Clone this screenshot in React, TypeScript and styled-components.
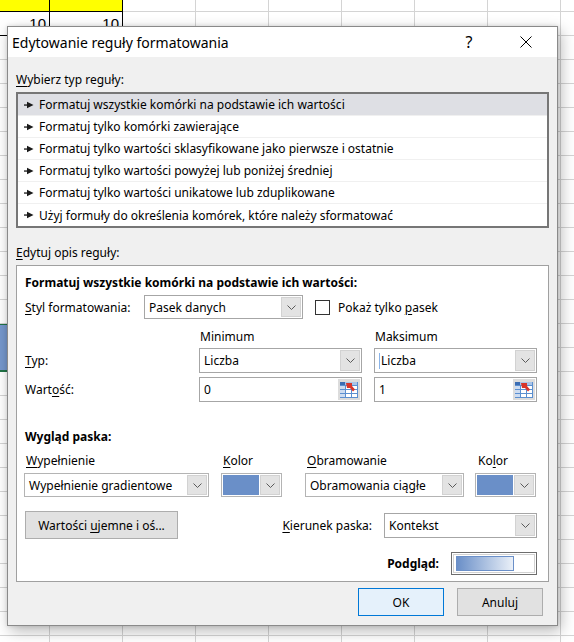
import React from "react";
import styled, { createGlobalStyle } from "styled-components";

const UI_FONT = `"Noto Sans", "Liberation Sans", sans-serif`;

const GlobalStyle = createGlobalStyle`
  html, body { margin: 0; padding: 0; background: #fff; }
  body { overflow: hidden; }
`;

/* ---------- spreadsheet behind the dialog ---------- */

const Page = styled.div`
  position: relative;
  width: 574px;
  height: 642px;
  overflow: hidden;
  background: #fff;
`;

const Sheet = styled.div`
  display: grid;
  grid-template-columns: 50px repeat(8, 73px);
  grid-template-rows: 12px repeat(27, 24px);
`;

type CellTone = "plain" | "header" | "value" | "selected";

const Cell = styled.div<{ $tone: CellTone }>`
  box-sizing: border-box;
  display: flex;
  align-items: flex-end;
  justify-content: flex-end;
  padding: 0 3px 4px 0;
  font-family: "Liberation Sans", Arial, sans-serif;
  font-size: 15px;
  line-height: 1;
  color: #000;
  background: ${(p) =>
    p.$tone === "header" ? "#ffff00" : p.$tone === "selected" ? "#7597cc" : "#fff"};
  border-right: 1px solid
    ${(p) => (p.$tone === "header" || p.$tone === "value" ? "#000" : "#d4d4d4")};
  border-bottom: ${(p) =>
    p.$tone === "selected"
      ? "2px solid #217346"
      : p.$tone === "header" || p.$tone === "value"
      ? "1px solid #000"
      : "1px solid #d4d4d4"};
  border-top: ${(p) => (p.$tone === "selected" ? "1px solid #217346" : "none")};
  grid-row: ${(p) => (p.$tone === "selected" ? "span 2" : "auto")};
`;

function SheetGrid() {
  const cells: React.ReactNode[] = [];
  for (let r = 0; r < 28; r++) {
    for (let c = 0; c < 9; c++) {
      if (r === 15 && c === 0) continue; // covered by the selected cell above
      let tone: CellTone = "plain";
      let text = "";
      if (r === 0 && c < 2) tone = "header";
      if (r === 1 && c < 2) {
        tone = "value";
        text = "10";
      }
      if (r === 14 && c === 0) tone = "selected";
      cells.push(
        <Cell key={`${r}-${c}`} $tone={tone}>
          {text}
        </Cell>
      );
    }
  }
  return <Sheet>{cells}</Sheet>;
}

/* ---------- dialog window ---------- */

const Dialog = styled.div`
  position: absolute;
  left: 7px;
  top: 26px;
  width: 551px;
  height: 600px;
  box-sizing: border-box;
  border: 1px solid #8a8a8a;
  background: #f0f0f0;
  box-shadow: 3px 5px 14px rgba(0, 0, 0, 0.28), 0 0 4px rgba(0, 0, 0, 0.12);
  display: flex;
  flex-direction: column;
  font-family: ${UI_FONT};
  font-size: 12px;
  color: #000;
`;

const TitleBar = styled.div`
  height: 30px;
  background: #fff;
  display: flex;
  align-items: center;
  padding-left: 4px;
`;

const Title = styled.div`
  font-size: 14px;
  flex: 1;
`;

const TitleButton = styled.div<{ $w: number }>`
  width: ${(p) => p.$w}px;
  height: 30px;
  display: flex;
  align-items: center;
  justify-content: center;
  font-size: 16px;
`;

const TitleButtons = styled.div`
  display: flex;
  gap: 27px;
  padding-right: 16px;
`;

const Body = styled.div`
  flex: 1;
  display: flex;
  flex-direction: column;
  padding: 0 8px;
`;

const Key = styled.u`
  text-decoration: underline;
  text-underline-offset: 2px;
`;

const SectionLabel = styled.div<{ $top: number }>`
  margin-top: ${(p) => p.$top}px;
  line-height: 16px;
`;

/* ---------- rule type list ---------- */

const RuleList = styled.ul`
  list-style: none;
  margin: 4px 0 0;
  padding: 0;
  height: 136px;
  box-sizing: border-box;
  border: 2px solid #767676;
  background: #fff;
`;

const RuleItem = styled.li<{ $selected?: boolean }>`
  height: 22px;
  box-sizing: border-box;
  display: flex;
  align-items: center;
  gap: 5px;
  padding-left: 6px;
  background: ${(p) => (p.$selected ? "#dedfe4" : "#fff")};
  border-bottom: 1px solid #f0f0f0;
  &:last-child {
    border-bottom: none;
  }
`;

const Pointer = () => (
  <svg width="10" height="8" viewBox="0 0 10 8">
    <rect x="0" y="3.4" width="4" height="1.3" fill="#1a1a1a" />
    <polygon points="3,0.8 9.5,4 3,7.2" fill="#1a1a1a" />
  </svg>
);

const rules = [
  "Formatuj wszystkie komórki na podstawie ich wartości",
  "Formatuj tylko komórki zawierające",
  "Formatuj tylko wartości sklasyfikowane jako pierwsze i ostatnie",
  "Formatuj tylko wartości powyżej lub poniżej średniej",
  "Formatuj tylko wartości unikatowe lub zduplikowane",
  "Użyj formuły do określenia komórek, które należy sformatować",
];

/* ---------- rule description panel ---------- */

const Panel = styled.div`
  margin-top: 4px;
  height: 317px;
  box-sizing: border-box;
  border: 1px solid #a0a0a0;
  background: #fff;
  padding: 9px 11px 0 8px;
  display: flex;
  flex-direction: column;
`;

const Heading = styled.div<{ $top: number }>`
  margin-top: ${(p) => p.$top}px;
  font-weight: 700;
  line-height: 16px;
`;

const StyleRow = styled.div`
  margin-top: 4px;
  height: 24px;
  display: flex;
  align-items: center;
`;

const StyleLabel = styled.div`
  width: 119px;
`;

const Field = styled.div<{ $w: number; $h: number; $border?: string }>`
  width: ${(p) => p.$w}px;
  height: ${(p) => p.$h}px;
  box-sizing: border-box;
  border: 1px solid ${(p) => p.$border ?? "#a6a6a6"};
  background: #fff;
  display: flex;
  align-items: center;
  padding: 1px;
`;

const FieldText = styled.div`
  flex: 1;
  padding-left: 3px;
  white-space: nowrap;
  overflow: hidden;
  display: flex;
  align-items: center;
`;

const Caret = styled.span`
  display: inline-block;
  width: 1px;
  height: 16px;
  margin-right: 1px;
  background: #8ab4e8;
`;

const DropButton = styled.div`
  width: 20px;
  align-self: stretch;
  box-sizing: border-box;
  background: #e3e3e3;
  border: 1px solid #d2d2d2;
  display: flex;
  align-items: center;
  justify-content: center;
`;

const Chevron = () => (
  <svg width="9" height="5" viewBox="0 0 9 5">
    <polyline points="0.5,0.5 4.5,4.5 8.5,0.5" fill="none" stroke="#5a5a5a" strokeWidth="1" />
  </svg>
);

function Select({
  w,
  h,
  value,
  caret,
  border,
}: {
  w: number;
  h: number;
  value: string;
  caret?: boolean;
  border?: string;
}) {
  return (
    <Field $w={w} $h={h} $border={border}>
      <FieldText>
        {caret && <Caret />}
        {value}
      </FieldText>
      <DropButton>
        <Chevron />
      </DropButton>
    </Field>
  );
}

const PickerButton = styled.div`
  width: 22px;
  align-self: stretch;
  background: #dcdcdc;
  display: flex;
  align-items: center;
  justify-content: center;
`;

const RangeIcon = () => (
  <svg width="18" height="16" viewBox="0 0 18 16">
    <rect x="0" y="0" width="18" height="16" fill="#fff" />
    <rect x="0" y="0" width="18" height="3" fill="#a9c4e8" />
    <rect x="0" y="0" width="5" height="3" fill="#3b6db3" />
    <rect x="0" y="3" width="5" height="13" fill="#cddcf1" />
    <g stroke="#5b8fd0" strokeWidth="1">
      <line x1="0" y1="3.5" x2="18" y2="3.5" />
      <line x1="0" y1="7.5" x2="18" y2="7.5" />
      <line x1="0" y1="11.5" x2="18" y2="11.5" />
      <line x1="0" y1="15.5" x2="18" y2="15.5" />
      <line x1="5.5" y1="3" x2="5.5" y2="16" />
      <line x1="11.5" y1="3" x2="11.5" y2="16" />
      <line x1="17.5" y1="0" x2="17.5" y2="16" />
    </g>
    <path d="M6 1 L12 1 L12 4 L15 7.5 L13 9.5 L10 6 L7 6 Z" fill="#d8352a" />
  </svg>
);

function RangeInput({ value }: { value: string }) {
  return (
    <Field $w={163} $h={25} $border="#a6a6a6">
      <FieldText>{value}</FieldText>
      <PickerButton>
        <RangeIcon />
      </PickerButton>
    </Field>
  );
}

const LimitRow = styled.div<{ $top: number; $h: number }>`
  margin-top: ${(p) => p.$top}px;
  height: ${(p) => p.$h}px;
  display: grid;
  grid-template-columns: 162px 163px 163px;
  column-gap: 12px;
  align-items: center;
`;

const ColumnHead = styled.div`
  padding-left: 1px;
  line-height: 16px;
`;

const Checkbox = styled.div`
  width: 15px;
  height: 15px;
  box-sizing: border-box;
  border: 1px solid #333;
  background: #fff;
  margin: 0 8px 0 12px;
`;

/* bar appearance block */

const LookGrid = styled.div`
  margin-left: -1px;
  display: grid;
  grid-template-columns: 197px 84px 170px 62px;
  grid-template-rows: 16px 24px;
  row-gap: 4px;
  margin-top: 8px;
`;

const LookLabel = styled.div<{ $pad?: number }>`
  padding-left: ${(p) => p.$pad ?? 2}px;
  line-height: 16px;
`;

const ColorPick = styled.div`
  width: 61px;
  height: 24px;
  box-sizing: border-box;
  border: 1px solid #b4b4b4;
  padding: 1px;
  display: flex;
  background: #fff;
`;

const Swatch = styled.div`
  flex: 1;
  background: #6a8fc8;
  margin-right: 1px;
`;

function ColorPicker() {
  return (
    <ColorPick>
      <Swatch />
      <DropButton>
        <Chevron />
      </DropButton>
    </ColorPick>
  );
}

const ActionRow = styled.div`
  margin-top: 14px;
  height: 28px;
  display: flex;
  align-items: center;
`;

const PushButton = styled.div<{ $w: number; $primary?: boolean }>`
  width: ${(p) => p.$w}px;
  height: 28px;
  box-sizing: border-box;
  border: 1px solid ${(p) => (p.$primary ? "#0078d7" : "#adadad")};
  background: ${(p) => (p.$primary ? "#e5f1fb" : "#e1e1e1")};
  display: flex;
  align-items: center;
  justify-content: center;
`;

const DirectionGroup = styled.div`
  margin-left: auto;
  display: flex;
  align-items: center;
  gap: 12px;
`;

const PreviewRow = styled.div`
  margin-top: 13px;
  display: flex;
  justify-content: flex-end;
  align-items: center;
  gap: 12px;
`;

const PreviewBox = styled.div`
  width: 86px;
  height: 23px;
  box-sizing: border-box;
  border: 1px solid #6d6d6d;
  padding: 1px;
  background: #fff;
`;

const PreviewInner = styled.div`
  height: 100%;
  box-sizing: border-box;
  border: 1px solid #d2d2d2;
  padding: 0 2px;
  display: flex;
  align-items: center;
`;

const DataBar = styled.div`
  width: 58px;
  height: 15px;
  box-sizing: border-box;
  border: 1px solid #6a8fc8;
  background: linear-gradient(to right, #6a8fc8, #eaf0f8);
`;

const Footer = styled.div`
  margin-top: 6px;
  margin-right: 6px;
  display: flex;
  justify-content: flex-end;
  gap: 13px;
`;

const CloseIcon = () => (
  <svg width="12" height="12" viewBox="0 0 12 12">
    <path d="M0.5 0.5 L11.5 11.5 M11.5 0.5 L0.5 11.5" stroke="#000" strokeWidth="1" />
  </svg>
);

export default function App() {
  return (
    <Page>
      <GlobalStyle />
      <SheetGrid />
      <Dialog>
        <TitleBar>
          <Title>Edytowanie reguły formatowania</Title>
          <TitleButtons>
            <TitleButton $w={30}>?</TitleButton>
            <TitleButton $w={30}>
              <CloseIcon />
            </TitleButton>
          </TitleButtons>
        </TitleBar>
        <Body>
          <SectionLabel $top={15}>
            <Key>W</Key>ybierz typ reguły:
          </SectionLabel>
          <RuleList>
            {rules.map((r, i) => (
              <RuleItem key={r} $selected={i === 0}>
                <Pointer />
                {r}
              </RuleItem>
            ))}
          </RuleList>

          <SectionLabel $top={17}>
            <Key>E</Key>dytuj opis reguły:
          </SectionLabel>
          <Panel>
            <Heading $top={0}>Formatuj wszystkie komórki na podstawie ich wartości:</Heading>
            <StyleRow>
              <StyleLabel>
                <Key>S</Key>tyl formatowania:
              </StyleLabel>
              <Select w={159} h={24} value="Pasek danych" />
              <Checkbox />
              <span>
                Pokaż tylko <Key>p</Key>asek
              </span>
            </StyleRow>

            <LimitRow $top={10} $h={16}>
              <span />
              <ColumnHead>Minimum</ColumnHead>
              <ColumnHead>Maksimum</ColumnHead>
            </LimitRow>
            <LimitRow $top={3} $h={25}>
              <span>
                <Key>T</Key>yp:
              </span>
              <Select w={163} h={25} value="Liczba" />
              <Select w={163} h={25} value="Liczba" caret />
            </LimitRow>
            <LimitRow $top={4} $h={25}>
              <span>
                Wart<Key>o</Key>ść:
              </span>
              <RangeInput value="0" />
              <RangeInput value="1" />
            </LimitRow>

            <Heading $top={27}>Wygląd paska:</Heading>
            <LookGrid>
              <LookLabel>
                <Key>W</Key>ypełnienie
              </LookLabel>
              <LookLabel>
                <Key>K</Key>olor
              </LookLabel>
              <LookLabel>
                <Key>O</Key>bramowanie
              </LookLabel>
              <LookLabel $pad={3}>
                Ko<Key>l</Key>or
              </LookLabel>
              <Select w={185} h={24} value="Wypełnienie gradientowe" border="#b4b4b4" />
              <ColorPicker />
              <Select w={159} h={24} value="Obramowania ciągłe" border="#b4b4b4" />
              <ColorPicker />
            </LookGrid>

            <ActionRow>
              <PushButton $w={153}>
                Wartości&nbsp;<Key>u</Key>jemne i oś...
              </PushButton>
              <DirectionGroup>
                <span>
                  <Key>K</Key>ierunek paska:
                </span>
                <Select w={153} h={25} value="Kontekst" />
              </DirectionGroup>
            </ActionRow>

            <PreviewRow>
              <Heading $top={0}>Podgląd:</Heading>
              <PreviewBox>
                <PreviewInner>
                  <DataBar />
                </PreviewInner>
              </PreviewBox>
            </PreviewRow>
          </Panel>

          <Footer>
            <PushButton $w={86} $primary>
              OK
            </PushButton>
            <PushButton $w={86}>Anuluj</PushButton>
          </Footer>
        </Body>
      </Dialog>
    </Page>
  );
}
